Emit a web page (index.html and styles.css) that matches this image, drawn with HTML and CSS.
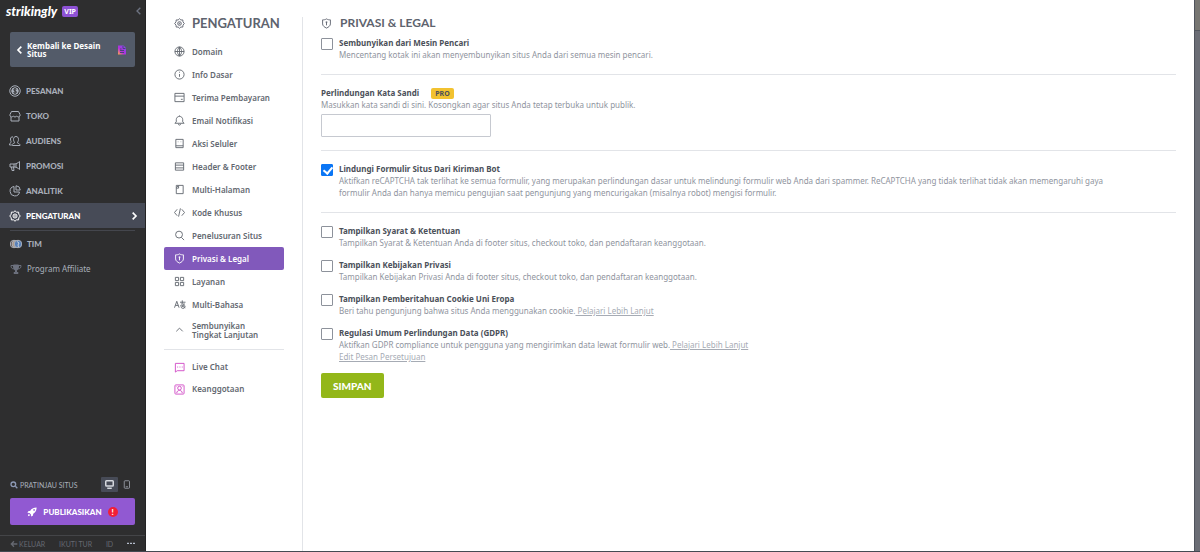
FILE: index.html
```html
<!DOCTYPE html>
<html lang="id">
<head>
    <meta charset="UTF-8">
    <meta name="viewport" content="width=device-width, initial-scale=1.0">
    <title>Pengaturan - Privasi &amp; Legal</title>
    <link rel="stylesheet" href="styles.css">
</head>
<body>
    <!-- shared icons -->
    <svg class="sprite" aria-hidden="true">
        <symbol id="gear" viewBox="0 0 24 24"><path d="M12 1.5l3 2.800 4.200-.1.4 4.200L22.500 12l-2.900 3.600-.4 4.200-4.200-.1-3 2.800-3-2.800-4.200.1-.4-4.200L1.500 12l2.900-3.600.4-4.200 4.200.1z"/><circle cx="12" cy="12" r="4"/><circle cx="12" cy="12" r="1"/></symbol>
        <symbol id="shield" viewBox="0 0 24 24"><path d="M12 2c3 2 6 2 8.500 2v9c0 4-4 7-8.500 9-4.500-2-8.500-5-8.500-9V4C6 4 9 4 12 2z"/><path d="M12 8v8M10 9h4"/></symbol>
    </svg>

    <div class="app">
        <aside class="sidebar">
            <div class="brand">
                <span class="logo">strikingly</span>
                <span class="vip">VIP</span>
                <button class="collapse" aria-label="Tutup menu"><svg class="icon-xs" viewBox="0 0 12 12"><path d="M8 1L3 6l5 5"/></svg></button>
            </div>
            <a class="back" href="#">
                <svg class="icon-xs" viewBox="0 0 12 12"><path stroke-width="2.5" d="M8 1L3 6l5 5"/></svg>
                <span>Kembali ke Desain Situs</span>
                <svg class="icon-doc" viewBox="0 0 20 20">
                    <defs><linearGradient id="warm" x1="0" y1="1" x2="1" y2="0"><stop offset="0" stop-color="#ffad42"/><stop offset=".4" stop-color="#b52fdd"/><stop offset="1" stop-color="#7655ed"/></linearGradient></defs>
                    <path class="doc-page" d="M2 1h11l5 5v13H2z"/><path class="doc-lines" d="M12 2v5h5M6 8h3M6 11h8M6 15h8"/>
                </svg>
            </a>
            <nav class="menu">
                <a href="#"><svg viewBox="0 0 24 24"><circle cx="12" cy="12" r="10.5"/><circle cx="12" cy="12" r="6.5" fill="currentColor"/><path class="cut" d="M15 8.500c-2-1.500-5.500-1-5.500 1.200 0 3 5.500 1.600 5.500 4.500 0 2.200-4 2.500-6 .8M12 6v12"/></svg>PESANAN</a>
                <a href="#"><svg viewBox="0 0 24 24"><path d="M5 3h14l3 6v3c-2 2.500-5 2.500-6.500 0-1.500 2.500-5.500 2.500-7 0C7 14.500 4 14.500 2 12V9zM4 14v8h16v-8"/></svg>TOKO</a>
                <a href="#"><svg viewBox="0 0 24 24"><path d="M7 21h15c0-4-3-4-5-5-1-1 2-3 2-7 0-4-2-6-5-6s-5 2-5 6c0 4 3 6 2 7-2 1-5 1-5 5zM8 4C5 3 3 5 3 8c0 4 2 5 1 7-1 1-3 1-3 5h4"/></svg>AUDIENS</a>
                <a href="#"><svg viewBox="0 0 24 24"><path d="M2 8h8c4 0 8-2 11-5v16c-3-3-7-5-11-5H2zM5 14l1 7h4l-1-7M10 8v6M14 7v8"/></svg>PROMOSI</a>
                <a href="#"><svg viewBox="0 0 24 24"><path d="M10 3a9.500 9.500 0 1 0 11 11H10zM14 1.500V10h8.500A9 9 0 0 0 14 1.500z"/></svg>ANALITIK</a>
                <a class="active" href="#"><svg><use href="#gear"/></svg>PENGATURAN<svg class="icon-xs next" viewBox="0 0 12 12"><path stroke-width="2.5" d="M4 1l5 5-5 5"/></svg></a>
            </nav>
            <nav class="menu extra">
                <a href="#"><svg viewBox="0 0 24 24"><circle cx="8" cy="12" r="7.5" fill="#5b4c48"/><circle cx="11" cy="12" r="7" fill="#b09a88"/><circle cx="16" cy="12" r="7.5" fill="#5780b9"/><path d="M14 7l4 3-2 4 1 4" stroke="#c5d0dc"/></svg>TIM</a>
                <a class="plain" href="#"><svg class="trophy" viewBox="0 0 24 24"><path d="M6 5H2c0 4 1 6 5 7M18 5h4c0 4-1 6-5 7"/><path d="M7 4h10v5c0 3-2 5-5 6-3-1-5-3-5-6zM11 15h2v4h3v2H8v-2h3z" fill="currentColor"/></svg>Program Affiliate</a>
            </nav>
            <div class="bottom">
                <div class="preview">
                    <a href="#"><svg class="icon-sm" viewBox="0 0 12 12"><circle cx="5" cy="5" r="3.5" stroke-width="2"/><path stroke-width="2" d="M8 8l3 3"/></svg>PRATINJAU SITUS</a>
                    <button class="device on" aria-label="Desktop"><svg class="icon-sm" viewBox="0 0 12 12"><rect x="1" y="1" width="10" height="7" rx="1" stroke-width="2"/><path stroke-width="2" d="M3 11h6"/></svg></button>
                    <button class="device" aria-label="Ponsel"><svg class="icon-sm" viewBox="0 0 12 12"><rect x="3" y="1" width="7" height="10" rx="1"/><path d="M5 9h3"/></svg></button>
                </div>
                <button class="publish"><svg class="icon-md" viewBox="0 0 24 24"><path fill="currentColor" stroke="none" d="M23 1C15 1 11 4 8 9L3 10l-2 4 5 .5L9.500 18l.5 5 4-2 1-5c5-3 8-7 8-15zM17 5a2 2 0 1 1 0 4 2 2 0 0 1 0-4zM4 16l4 4-6 2z"/></svg>PUBLIKASIKAN<span class="alert">!</span></button>
                <div class="footer">
                    <a href="#"><svg class="icon-xs" viewBox="0 0 12 12"><path d="M6 2L2 6l4 4M2 6h9"/></svg>KELUAR</a><a href="#">IKUTI TUR</a><a href="#">ID</a><a class="dots" href="#" aria-label="Lainnya"><svg class="icon-xs" viewBox="0 0 12 12"><path d="M0 5h3M4.500 5h3M9 5h3"/></svg></a>
                </div>
            </div>
        </aside>

        <main class="panel">
            <aside class="settings">
                <h1><svg><use href="#gear"/></svg>PENGATURAN</h1>
                <nav class="tabs">
                    <a href="#"><svg viewBox="0 0 24 24"><circle cx="12" cy="12" r="10"/><path d="M2 12h20M12 2v20M12 2c-6 6-6 14 0 20 6-6 6-14 0-20"/></svg>Domain</a>
                    <a href="#"><svg viewBox="0 0 24 24"><circle cx="12" cy="12" r="10"/><path d="M12 11v6M12 6v2"/></svg>Info Dasar</a>
                    <a href="#"><svg viewBox="0 0 24 24"><path d="M2 3h20v18H2zM2 9h20M15 16h4"/></svg>Terima Pembayaran</a>
                    <a href="#"><svg viewBox="0 0 24 24"><path d="M2 18h20l-3-3v-5c0-4-3-7-7-7s-7 3-7 7v5zM9 19c1 4 5 4 6 0M12 1v2"/></svg>Email Notifikasi</a>
                    <a href="#"><svg viewBox="0 0 24 24"><path d="M4 3h16v18H4zM4 17h16M9 8v1M15 8v1"/></svg>Aksi Seluler</a>
                    <a href="#"><svg viewBox="0 0 24 24"><path d="M3 4h18v16H3zM3 9h18M3 15h18"/></svg>Header &amp; Footer</a>
                    <a href="#"><svg viewBox="0 0 24 24"><path d="M10 3h10v18H5V8zM10 3v6H5M9 3H5v5"/></svg>Multi-Halaman</a>
                    <a href="#"><svg viewBox="0 0 24 24"><path d="M7 5l-6 7 6 7M17 5l6 7-6 7M14 3l-4 18"/></svg>Kode Khusus</a>
                    <a href="#"><svg viewBox="0 0 24 24"><circle cx="11" cy="10" r="7.5"/><path d="M16 16l6 6"/></svg>Penelusuran Situs</a>
                    <a class="current" href="#"><svg><use href="#shield"/></svg>Privasi &amp; Legal</a>
                    <a href="#"><svg viewBox="0 0 24 24"><path d="M3 3h7v7H3zM14 3h7v7h-7zM3 14h7v7H3zM14 14h7v7h-7z"/></svg>Layanan</a>
                    <a href="#"><svg class="wide" viewBox="0 0 26 24"><path d="M1 19L6 5l5 14M3 14h6M13 7h12M18 3v7M15 11h8l-5 4M13 15h11c0 6-4 7-8 4 0-4 5-3 8 1"/></svg>Multi-Bahasa</a>
                    <a class="two-line" href="#"><svg viewBox="0 0 24 24"><path d="M5 16l7-7 7 7"/></svg>Sembunyikan Tingkat Lanjutan</a>
                </nav>
                <nav class="tabs addons">
                    <a href="#"><svg class="pink" viewBox="0 0 24 24"><path d="M3 3h19v16H7l-4 3zM7 11h2M12 11h2M17 11h2"/></svg>Live Chat</a>
                    <a href="#"><svg class="pink" viewBox="0 0 24 24"><rect x="2" y="2" width="20" height="20" rx="2"/><circle cx="12" cy="9" r="4"/><path d="M6 20c0-8 12-8 12 0M5 5v1M19 5v1"/></svg>Keanggotaan</a>
                </nav>
            </aside>

            <form class="content">
                <h2><svg><use href="#shield"/></svg>PRIVASI &amp; LEGAL</h2>
                <div class="option">
                    <input type="checkbox" id="hide">
                    <div><label for="hide">Sembunyikan dari Mesin Pencari</label>
                    <p>Mencentang kotak ini akan menyembunyikan situs Anda dari semua mesin pencari.</p></div>
                </div>
                <hr>
                <div class="password">
                    <label for="password">Perlindungan Kata Sandi</label><span class="pro">PRO</span>
                    <p>Masukkan kata sandi di sini. Kosongkan agar situs Anda tetap terbuka untuk publik.</p>
                    <input type="text" id="password">
                </div>
                <hr>
                <div class="option">
                    <input type="checkbox" id="bot" checked>
                    <div><label for="bot">Lindungi Formulir Situs Dari Kiriman Bot</label>
                    <p>Aktifkan reCAPTCHA tak terlihat ke semua formulir, yang merupakan perlindungan dasar untuk melindungi formulir web Anda dari spammer. ReCAPTCHA yang tidak terlihat tidak akan memengaruhi gaya formulir Anda dan hanya memicu pengujian saat pengunjung yang mencurigakan (misalnya robot) mengisi formulir.</p></div>
                </div>
                <hr>
                <div class="option">
                    <input type="checkbox" id="terms">
                    <div><label for="terms">Tampilkan Syarat &amp; Ketentuan</label>
                    <p>Tampilkan Syarat &amp; Ketentuan Anda di footer situs, checkout toko, dan pendaftaran keanggotaan.</p></div>
                </div>
                <div class="option">
                    <input type="checkbox" id="privacy">
                    <div><label for="privacy">Tampilkan Kebijakan Privasi</label>
                    <p>Tampilkan Kebijakan Privasi Anda di footer situs, checkout toko, dan pendaftaran keanggotaan.</p></div>
                </div>
                <div class="option">
                    <input type="checkbox" id="cookie">
                    <div><label for="cookie">Tampilkan Pemberitahuan Cookie Uni Eropa</label>
                    <p>Beri tahu pengunjung bahwa situs Anda menggunakan cookie.<a href="#"> Pelajari Lebih Lanjut</a></p></div>
                </div>
                <div class="option">
                    <input type="checkbox" id="gdpr">
                    <div><label for="gdpr">Regulasi Umum Perlindungan Data (GDPR)</label>
                    <p>Aktifkan GDPR compliance untuk pengguna yang mengirimkan data lewat formulir web.<a href="#"> Pelajari Lebih Lanjut</a><br><a href="#">Edit Pesan Persetujuan</a></p></div>
                </div>
                <button class="save" type="button">SIMPAN</button>
            </form>
        </main>
        <div class="backdrop"></div>
    </div>
</body>
</html>
```
FILE: styles.css
```css
* {
    box-sizing: border-box;
}
body {
    margin: 0;
    font-family: "Noto Sans", "Open Sans", sans-serif;
    font-size: 8px;
    line-height: 12px;
    color: #4b5059;
}
a {
    color: inherit;
    text-decoration: none;
}
button {
    border: 0;
    padding: 0;
    background: none;
    color: inherit;
    cursor: pointer;
}
svg {
    flex: none;
    width: 12px;
    height: 12px;
    fill: none;
    stroke: currentColor;
    stroke-width: 2;
}
.sprite {
    display: none;
}
.icon-xs {
    width: 8px;
    height: 8px;
}
.icon-sm {
    width: 9px;
    height: 9px;
    stroke-width: 1;
}
.icon-md {
    width: 10px;
    height: 10px;
}
.app {
    display: flex;
    min-height: 100vh;
    border-bottom: 1px solid #444a52;
}

/* dark sidebar */
.sidebar {
    display: flex;
    flex-direction: column;
    flex: none;
    width: 146px;
    background: #2e2e2f;
    border-right: 1px solid #232324;
    color: #a9afba;
}
.brand {
    display: flex;
    align-items: center;
    height: 22px;
    padding: 0 2px 0 6px;
}
.logo {
    font-family: Lato, sans-serif;
    font-size: 13px;
    font-weight: 900;
    font-style: italic;
    color: #fff;
}
.vip {
    margin-left: 5px;
    padding: 0 2px;
    border-radius: 2px;
    background: #8e52d5;
    color: #fff;
    font-size: 7px;
    font-weight: 700;
    line-height: 11px;
}
.collapse {
    margin-left: auto;
    color: #6c7280;
    line-height: 8px;
}
.back {
    display: flex;
    align-items: center;
    gap: 3px;
    margin: 10px 10px 11px;
    padding: 0 8px 0 6px;
    height: 35px;
    border-radius: 2px;
    background: #535b69;
    color: #fff;
    font-weight: 700;
    line-height: 8px;
}
.back span {
    flex: 1;
}
.icon-doc {
    width: 10px;
    height: 10px;
}
.doc-page {
    fill: url(#warm);
    stroke: none;
}
.doc-lines {
    stroke: #4b4478;
}
.menu a {
    display: flex;
    align-items: center;
    gap: 5px;
    height: 25px;
    padding: 0 7px 0 9px;
    font-family: Lato, sans-serif;
    font-weight: 900;
}
.menu .cut {
    stroke: #2e2e2f;
}
.menu .active {
    background: #474b57;
    color: #fff;
}
.next {
    margin-left: auto;
}
.extra {
    margin: 2px 10px 0;
    border-top: 1px solid #44464d;
}
.extra a {
    padding: 0;
}
.menu .plain {
    font-family: "Noto Sans", "Open Sans", sans-serif;
    font-weight: 400;
}
.trophy {
    color: #6c717e;
}
.bottom {
    margin-top: auto;
}
.preview {
    display: flex;
    align-items: center;
    margin: 0 10px 6px;
    font-family: Lato, sans-serif;
    font-size: 7px;
}
.preview a {
    display: flex;
    align-items: center;
    gap: 2px;
    flex: 1;
}
.preview a svg {
    width: 8px;
    height: 8px;
    color: #8d99b5;
}
.device {
    display: flex;
    align-items: center;
    justify-content: center;
    width: 17px;
    height: 15px;
    border-radius: 1px;
}
.device.on {
    background: #474b57;
    color: #d5d8de;
}
.publish {
    display: flex;
    align-items: center;
    justify-content: center;
    gap: 6px;
    width: calc(100% - 20px);
    height: 27px;
    margin: 0 10px 10px;
    border-radius: 2px;
    background: #9159d2;
    color: #fff;
    font-family: Lato, sans-serif;
    font-size: 8px;
    font-weight: 900;
}
.alert {
    width: 10px;
    border-radius: 50%;
    background: #f21f38;
    line-height: 10px;
}
.footer {
    display: flex;
    justify-content: space-between;
    height: 16px;
    padding: 0 10px;
    border-top: 1px solid #444548;
    color: #656871;
    font-family: Lato, sans-serif;
    font-size: 7px;
}
.footer a {
    display: flex;
    align-items: center;
    gap: 1px;
}
.footer .dots {
    color: #b4bccb;
}

/* settings panel */
.panel {
    display: flex;
    flex: 1;
    gap: 18px;
    padding: 17px 18px 0;
    background: #fff;
}
.settings {
    flex: none;
    width: 139px;
    padding-right: 18px;
    border-right: 1px solid #e2e4e8;
}
h1, h2 {
    display: flex;
    align-items: center;
    margin: 0;
    font-family: Lato, sans-serif;
    font-weight: 700;
    color: #5e636e;
    line-height: 12px;
}
h1 {
    gap: 6px;
    height: 12px;
    margin-bottom: 11px;
    padding-left: 10px;
    font-size: 13px;
}
h2 {
    gap: 7px;
    margin-bottom: 8px;
    font-size: 12px;
}
h1 svg, h2 svg {
    width: 11px;
    height: 11px;
    margin-right: 1px;
}
.tabs a {
    display: flex;
    align-items: center;
    gap: 6px;
    height: 23px;
    padding-left: 10px;
    border-radius: 2px;
    color: #636870;
    font-weight: 600;
}
.tabs svg {
    width: 11px;
    height: 11px;
    margin-right: 1px;
}
.tabs .wide {
    width: 12px;
    margin-right: 0;
}
.tabs .current {
    background: #8159bb;
    color: #fff;
}
.tabs .two-line {
    height: 27px;
    padding-right: 20px;
    line-height: 9px;
}
.addons {
    margin-top: 6px;
    padding-top: 6px;
    border-top: 1px solid #e2e4e8;
}
.addons a {
    height: 22px;
}
.tabs .pink {
    color: #d14bc6;
}

/* form */
.content {
    flex: 1;
    min-width: 0;
}
.content label {
    display: block;
    width: fit-content;
    font-weight: 700;
}
p {
    margin: 0;
    color: #8f949e;
}
p a {
    color: #a6abb4;
    text-decoration: underline;
}
hr {
    margin: 13px 0 12px;
    border: 0;
    border-top: 1px solid #e2e4e8;
}
.option {
    display: flex;
    gap: 6px;
    padding-right: 54px;
}
.option + .option {
    margin-top: 10px;
}
.option input {
    appearance: none;
    flex: none;
    width: 12px;
    height: 12px;
    margin: 1px 0 0;
    border: 1px solid #8d929b;
    border-radius: 1px;
}
.option input:checked {
    border-color: #0b76f5;
    background: #0b76f5;
}
.option input:checked::after {
    content: "";
    display: block;
    width: 4px;
    height: 7px;
    margin: 0 0 0 3px;
    border: solid #fff;
    border-width: 0 2px 2px 0;
    transform: rotate(40deg);
}
.password label {
    display: inline-block;
}
.pro {
    display: inline-block;
    margin-left: 12px;
    padding: 0 4px;
    border-radius: 2px;
    background: #f2c230;
    font-size: 7px;
    font-weight: 700;
    line-height: 11px;
}
.password input {
    display: block;
    width: 170px;
    height: 23px;
    margin-top: 3px;
    border: 1px solid #c6c9d0;
    border-radius: 1px;
}
.save {
    height: 25px;
    margin-top: 10px;
    padding: 0 12px;
    border-radius: 2px;
    background: #93b719;
    color: #fff;
    font-family: Lato, sans-serif;
    font-size: 10px;
    font-weight: 900;
}
.backdrop {
    flex: none;
    width: 6px;
    border-left: 1px solid #4f535c;
    background: linear-gradient(#777672 30px, #53575f 30px, #53575f 31px, #6b6d75 31px);
}
```
